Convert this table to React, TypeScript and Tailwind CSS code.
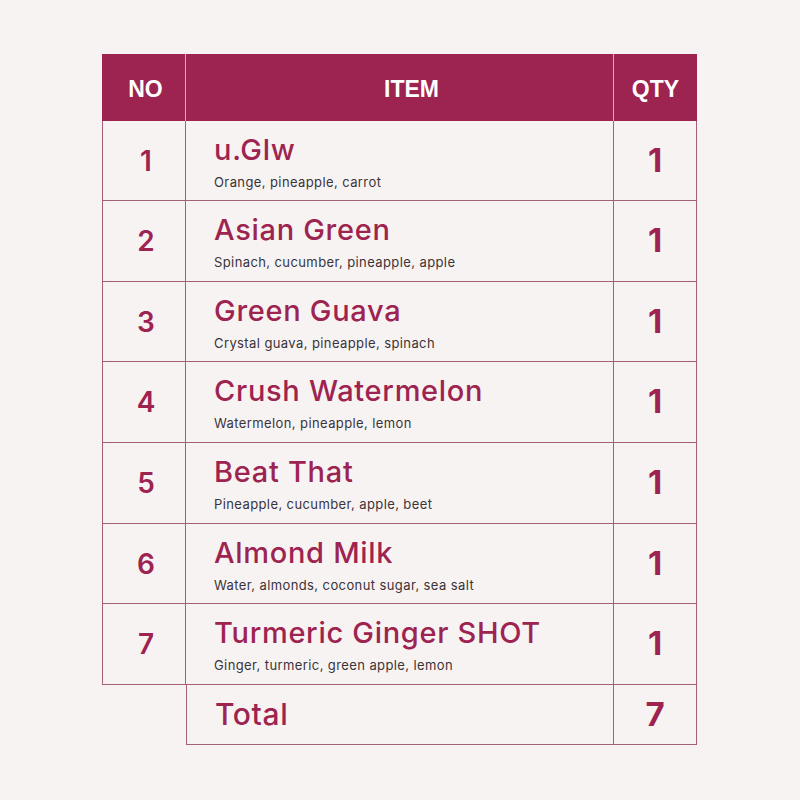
const rows = [
  { no: 1, name: 'u.Glw', desc: 'Orange, pineapple, carrot', h: 'h-[80px]' },
  { no: 2, name: 'Asian Green', desc: 'Spinach, cucumber, pineapple, apple', h: 'h-[81px]' },
  { no: 3, name: 'Green Guava', desc: 'Crystal guava, pineapple, spinach', h: 'h-[80px]' },
  { no: 4, name: 'Crush Watermelon', desc: 'Watermelon, pineapple, lemon', h: 'h-[81px]' },
  { no: 5, name: 'Beat That', desc: 'Pineapple, cucumber, apple, beet', h: 'h-[81px]' },
  { no: 6, name: 'Almond Milk', desc: 'Water, almonds, coconut sugar, sea salt', h: 'h-[80px]' },
  { no: 7, name: 'Turmeric Ginger SHOT', desc: 'Ginger, turmeric, green apple, lemon', h: 'h-[81px]' },
];

export default function App() {
  return (
    <div className="min-h-[800px] w-[800px] bg-[#f8f3f3] pt-[54px] font-['Inter',sans-serif]">
      <div className="ml-[102px] w-[595px]">
        {/* header */}
        <div className="grid h-[67px] grid-cols-[84px_428px_83px] bg-[#9d2450] pt-[4px] font-['Liberation_Sans',sans-serif] text-[23px] font-bold text-white">
          <div className="-mt-[4px] flex items-center justify-center border-r border-[#d9a8ba] pl-[4px] pt-[4px]">NO</div>
          <div className="-mt-[4px] flex items-center justify-center border-r border-[#d9a8ba] pl-[24px] pt-[4px]">ITEM</div>
          <div className="flex items-center justify-center">QTY</div>
        </div>

        {rows.map((row) => (
          <div
            className={`grid grid-cols-[84px_428px_83px] border-b border-[#a65f79] ${row.h}`}
            key={row.no}
          >
            <div className="flex items-center justify-center border-x border-[#a65f79] pl-[4px] text-[28px] font-semibold text-[#9d2450]">
              {row.no}
            </div>
            <div className="border-r border-[#a65f79] pl-[28px] pt-[13px]">
              <p className="text-[29px] font-medium leading-[32px] tracking-[0.7px] text-[#9d2450]">
                {row.name}
              </p>
              <p className="mt-[7px] text-[13px] leading-[18px] tracking-[0.4px] text-[#3a3438]">
                {row.desc}
              </p>
            </div>
            <div className="flex items-center justify-center border-r border-[#a65f79] text-[33px] font-bold text-[#9d2450]">
              1
            </div>
          </div>
        ))}

        {/* total */}
        <div className="grid h-[60px] grid-cols-[84px_428px_83px]">
          <div />
          <div className="flex items-center border-x border-b border-[#a65f79] pl-[28px] text-[30px] font-medium tracking-[0.6px] text-[#9d2450]">
            Total
          </div>
          <div className="flex items-center justify-center border-r border-b border-[#a65f79] text-[33px] font-bold text-[#9d2450]">
            7
          </div>
        </div>
      </div>
    </div>
  );
}
